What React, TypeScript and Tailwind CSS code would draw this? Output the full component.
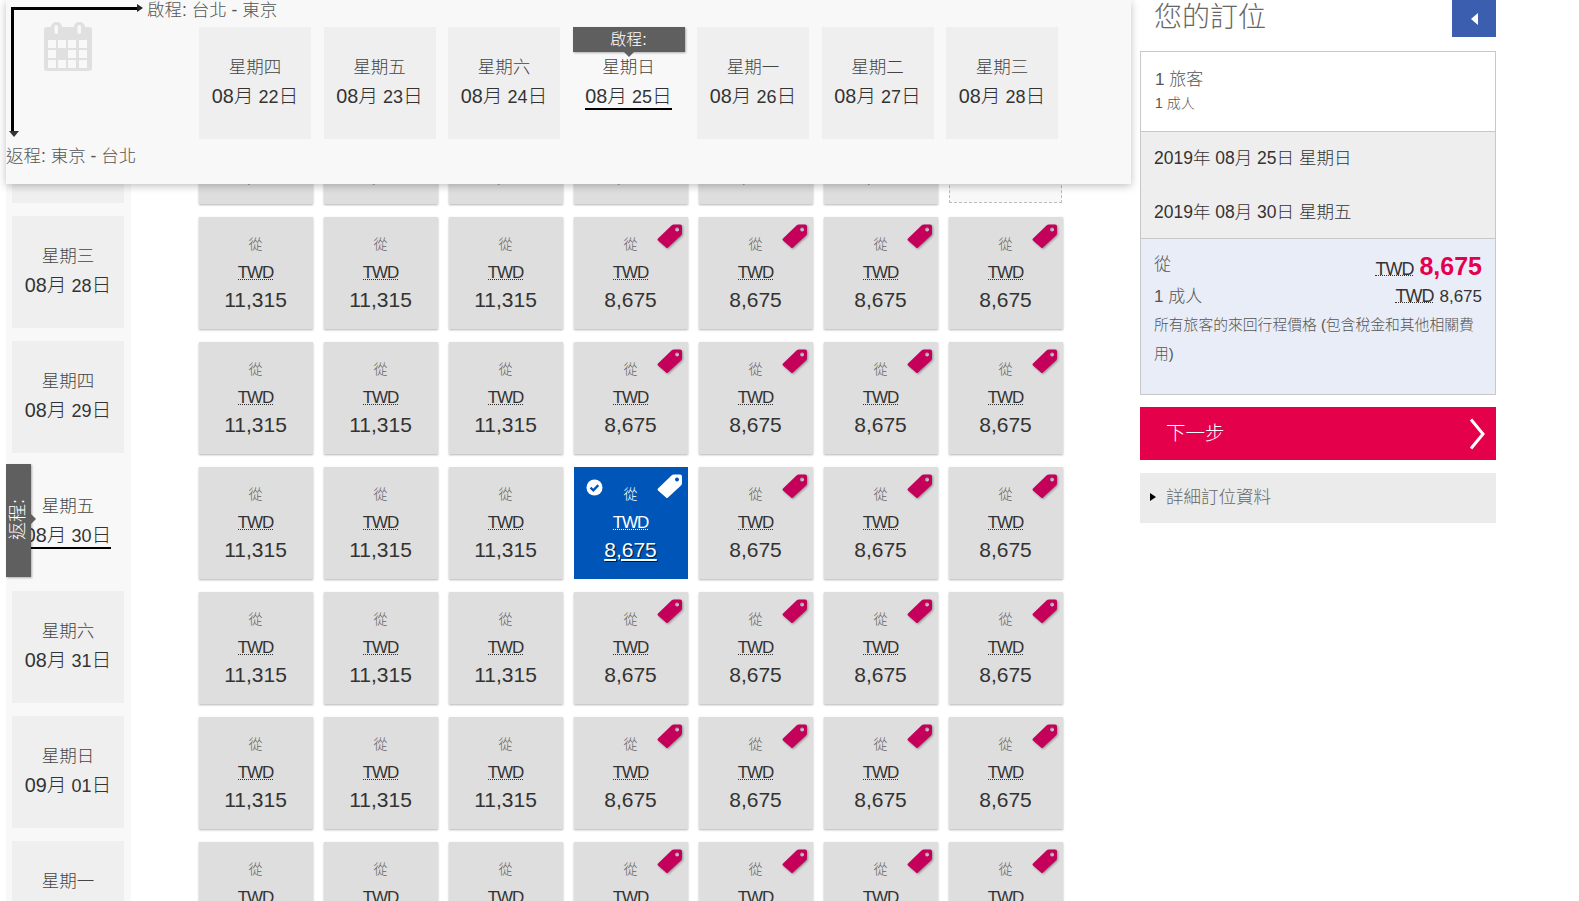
const F = "font-['Liberation_Sans','Noto_Sans_CJK_TC',sans-serif]";

function Tag({ white }: { white?: boolean }) {
  return (
    <svg viewBox="0 0 26 26" className={`absolute right-[5px] top-[6px] h-[26px] w-[26px] ${white ? "" : "drop-shadow-[1px_1px_1px_rgba(0,0,0,0.35)]"}`}>
      <path
        fill={white ? "#ffffff" : "#c4005a"}
        fillRule="evenodd"
        d="M1 15.5 L14.5 2.5 Q15.5 1.5 17 1.5 L23 1.5 Q25 1.5 25 3.5 L25 10 Q25 11.5 24 12.5 L11 24.5 Q10 25.5 9 24.5 L1 17.5 Q0 16.5 1 15.5 Z M20 4.5 a2 2 0 1 0 .01 0 Z"
      />
    </svg>
  );
}

function Check() {
  return (
    <svg viewBox="0 0 18 18" className="absolute left-[12px] top-[12px] h-[17px] w-[17px]">
      <circle cx="9" cy="9" r="8.5" fill="#fff" />
      <path d="M4.8 9.2 L7.8 12 L13 6.5" fill="none" stroke="#0056b8" strokeWidth="2.4" />
    </svg>
  );
}

function Cell({ price, tag, selected }: { price: string; tag?: boolean; selected?: boolean }) {
  return (
    <div
      className={`relative flex h-[112px] w-[114px] shrink-0 flex-col items-center pr-[1px] pt-[19px] ${
        selected ? "bg-[#0056b8] text-white" : "bg-[#dedede] text-[#333] shadow-[0_1px_2px_rgba(0,0,0,0.3)]"
      }`}
    >
      {selected && <Check />}
      {tag && <Tag white={selected} />}
      <div className={`h-[16px] text-[14px] leading-[16px] ${selected ? "text-white" : "text-[#666]"}`}>從</div>
      <div className="mt-[15px] border-b border-dotted border-current text-[17px] leading-[12px] tracking-[-1px]">TWD</div>
      <div className={`mt-[6px] text-[21px] leading-[28px] ${selected ? "underline [text-shadow:1px_1px_1px_rgba(0,0,0,0.7)]" : ""}`}>{price}</div>
    </div>
  );
}

function DateBox({ day, date, num, active, sel }: { day: string; date: string; num: string; active?: boolean; sel?: boolean }) {
  return (
    <div className={`flex h-[112px] w-[112px] shrink-0 flex-col items-center pt-[26px] text-[#333] ${sel ? "bg-transparent" : "bg-[#efefef]"}`}>
      <div className="text-[17.5px] leading-[28px] text-[#444]">{day}</div>
      <div className={`mt-[4px] whitespace-nowrap text-[19.8px] leading-[22px] ${active ? "border-b-2 border-black" : ""}`}>
        {date}
        <span className="text-[18px]"> {num}</span>日
      </div>
    </div>
  );
}

const rows = [
  { day: "星期二", date: "08月", num: "27", dashed: true },
  { day: "星期三", date: "08月", num: "28" },
  { day: "星期四", date: "08月", num: "29" },
  { day: "星期五", date: "08月", num: "30", sel: true },
  { day: "星期六", date: "08月", num: "31" },
  { day: "星期日", date: "09月", num: "01" },
  { day: "星期一", date: "09月", num: "02" },
];

const head = [
  ["星期四", "22"],
  ["星期五", "23"],
  ["星期六", "24"],
  ["星期日", "25"],
  ["星期一", "26"],
  ["星期二", "27"],
  ["星期三", "28"],
];

function Calendar() {
  return (
    <svg viewBox="0 0 48 51" className="h-[51px] w-[48px]">
      <path
        fill="#e0e0e0"
        fillRule="evenodd"
        d="M3 6 H45 a3 3 0 0 1 3 3 V47 a3 3 0 0 1 -3 3 H3 a3 3 0 0 1 -3 -3 V9 a3 3 0 0 1 3 -3 Z M4 19 V27 H12 V19 Z M14 19 V27 H22 V19 Z M24 19 V27 H32 V19 Z M35 19 V27 H43 V19 Z M4 29 V37 H12 V29 Z M24 29 V37 H32 V29 Z M35 29 V37 H43 V29 Z M4 39 V47 H12 V39 Z M14 39 V47 H22 V39 Z M24 39 V47 H32 V39 Z M35 39 V47 H43 V39 Z"
      />
      <rect x="7" y="1" width="11" height="14" rx="5" fill="#e0e0e0" />
      <rect x="30" y="1" width="11" height="14" rx="5" fill="#e0e0e0" />
      <rect x="10.5" y="4" width="3.5" height="9" rx="1.7" fill="#f8f8f8" />
      <rect x="33.5" y="4" width="3.5" height="9" rx="1.7" fill="#f8f8f8" />
    </svg>
  );
}

export default function App() {
  return (
    <div className={`${F} relative flex h-[901px] w-[1579px] overflow-hidden bg-white font-light`}>
      {/* left column */}
      <div className="relative w-[1140px] shrink-0">
        {/* Grid */}
        <div className="ml-[6px] flex flex-col gap-[13px] pt-[92px]">
          {rows.map((r, i) => (
            <div key={i} className="flex">
              <div className="w-[125px] shrink-0 bg-[#f8f8f8] px-[6px] -my-[7px] py-[7px]">
                <div className="-mt-[1px]">
                  <DateBox day={r.day} date={r.date} num={r.num} active={r.sel} sel={r.sel} />
                </div>
              </div>
              <div className="ml-[68px] flex gap-[11px]">
                {[0, 1, 2, 3, 4, 5, 6].map((c) => (
                  <div key={c} className="w-[114px] shrink-0">
                    {r.dashed && c === 6 ? (
                      <div className="h-[111px] w-[113px] border border-dashed border-[#bbb] bg-[#f8f8f8]" />
                    ) : (
                      <Cell price={c < 3 ? "11,315" : "8,675"} tag={c >= 3} selected={r.sel && c === 3} />
                    )}
                  </div>
                ))}
              </div>
            </div>
          ))}
        </div>

        {/* return label overlay */}
        <div className="absolute left-[6px] top-[464px] flex h-[113px] w-[25px] items-center justify-center bg-[#5f5f5f] shadow-[1px_1px_2px_rgba(0,0,0,0.3)]">
          <span className="mb-[3px] -rotate-90 whitespace-nowrap text-[18px] text-white">返程:</span>
          <span className="absolute -right-[5px] top-[50px] h-0 w-0 border-y-[5px] border-l-[5px] border-y-transparent border-l-[#5f5f5f]" />
        </div>

        {/* top sticky panel */}
        <div className="absolute left-[6px] top-0 flex h-[184px] w-[1125px] bg-[#f8f8f8] shadow-[0_2px_8px_rgba(0,0,0,0.25)]">
          <div className="relative w-[193px] shrink-0">
            <div className="absolute left-[5px] top-[7px] h-[2.5px] w-[127px] bg-black" />
            <div className="absolute left-[131px] top-[4px] h-0 w-0 border-y-[4.5px] border-l-[6px] border-y-transparent border-l-[#222]" />
            <div className="absolute left-[5px] top-[7px] h-[126px] w-[3px] bg-black" />
            <div className="absolute left-[3px] top-[131px] h-0 w-0 border-x-[5px] border-t-[6px] border-x-transparent border-t-[#333]" />
            <div className="absolute left-[141px] top-0 whitespace-nowrap text-[17.5px] leading-[20px] text-[#555]">啟程: 台北 - 東京</div>
            <div className="absolute left-0 top-[146px] whitespace-nowrap text-[17.5px] leading-[20px] text-[#555]">返程: 東京 - 台北</div>
            <div className="absolute left-[38px] top-[21px]"><Calendar /></div>
          </div>
          <div className="flex gap-[12.5px] pt-[27px]">
            {head.map(([d, n], i) => (
              <div key={i} className="relative">
                <DateBox day={d} date="08月" num={n} active={i === 3} sel={i === 3} />
                {i === 3 && (
                  <div className="absolute left-0 top-0 flex h-[25px] w-[112px] items-center justify-center bg-[#5f5f5f] text-[16px] text-white shadow-[1px_1px_2px_rgba(0,0,0,0.3)]">
                    啟程:
                    <span className="absolute -bottom-[5px] left-[51px] h-0 w-0 border-x-[5px] border-t-[5px] border-x-transparent border-t-[#5f5f5f]" />
                  </div>
                )}
              </div>
            ))}
          </div>
        </div>
      </div>

      {/* right column */}
      <div className="w-[356px] shrink-0">
        <div className="flex h-[51px] items-start justify-between pl-[14px]">
          <div className="pt-[1px] text-[28px] leading-[34px] text-[#666]">您的訂位</div>
          <div className="flex h-[37px] w-[44px] items-center justify-center bg-[#3b5fae]">
            <span className="h-0 w-0 border-y-[6px] border-r-[7px] border-y-transparent border-r-white" />
          </div>
        </div>
        <div className="border border-[#c8c8c8]">
          <div className="h-[79px] bg-white px-[14px] pt-[16px] text-[#555]">
            <div className="text-[17px] leading-[24px]">1 旅客</div>
            <div className="mt-[1px] text-[14px] leading-[20px]">1 成人</div>
          </div>
          <div className="h-[107px] border-t border-[#c8c8c8] bg-[#eeeeee] px-[13px] pt-[14px] text-[17.5px] leading-[24px] text-[#333]">
            <div>2019年 08月 25日 星期日</div>
            <div className="mt-[29.5px]">2019年 08月 30日 星期五</div>
          </div>
          <div className="h-[156px] border-t border-[#c8c8c8] bg-[#e9edf7] px-[13px] pt-[12px] text-[#555]">
            <div className="flex items-end justify-between">
              <span className="mb-[1px] text-[17px] leading-[28px]">從</span>
              <span className="flex items-baseline gap-[6px] leading-[28px]">
                <span className="border-b border-dotted border-[#333] text-[18px] leading-[12px] tracking-[-1px] text-[#333]">TWD</span>
                <span className="text-[25px] font-bold text-[#e4004f]">8,675</span>
              </span>
            </div>
            <div className="mt-[4px] flex items-end justify-between text-[17px] leading-[26px]">
              <span>1 成人</span>
              <span className="flex items-baseline gap-[6px] text-[#333]">
                <span className="border-b border-dotted border-[#333] text-[18px] leading-[12px] tracking-[-1px]">TWD</span>
                <span>8,675</span>
              </span>
            </div>
            <div className="mt-[1px] text-[14.8px] leading-[29px]">所有旅客的來回行程價格 (包含稅金和其他相關費用)</div>
          </div>
        </div>
        <div className="mt-[12px] flex h-[53px] items-center justify-between bg-[#e5004c] pl-[26px] pr-[11px]">
          <span className="pt-[1px] text-[19.5px] text-white">下一步</span>
          <svg viewBox="0 0 16 32" className="h-[32px] w-[16px]">
            <path d="M2 1.5 L14 16 L2 30.5" fill="none" stroke="#fff" strokeWidth="3" />
          </svg>
        </div>
        <div className="mt-[13px] flex h-[50px] items-center bg-[#ebebeb] pb-[2px] pl-[10px]">
          <span className="h-0 w-0 border-y-[4px] border-l-[6px] border-y-transparent border-l-black" />
          <span className="ml-[10px] text-[17.5px] text-[#666]">詳細訂位資料</span>
        </div>
      </div>
    </div>
  );
}
